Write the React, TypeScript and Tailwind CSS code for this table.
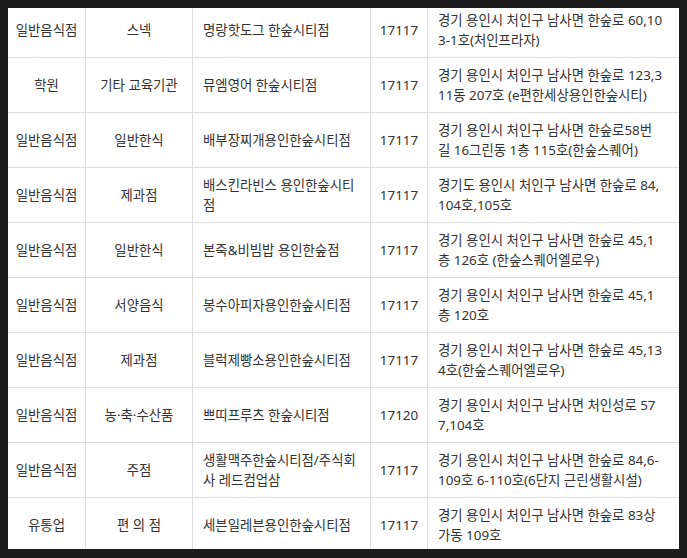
type Row = {
  type: string;
  category: string;
  name: string[];
  zip: string;
  address: string[];
};

const rows: Row[] = [
  {
    type: "일반음식점",
    category: "스넥",
    name: ["명랑핫도그 한숲시티점"],
    zip: "17117",
    address: ["경기 용인시 처인구 남사면 한숲로 60,10", "3-1호(처인프라자)"],
  },
  {
    type: "학원",
    category: "기타 교육기관",
    name: ["뮤엠영어 한숲시티점"],
    zip: "17117",
    address: ["경기 용인시 처인구 남사면 한숲로 123,3", "11동 207호 (e편한세상용인한숲시티)"],
  },
  {
    type: "일반음식점",
    category: "일반한식",
    name: ["배부장찌개용인한숲시티점"],
    zip: "17117",
    address: ["경기 용인시 처인구 남사면 한숲로58번", "길 16그린동 1층 115호(한숲스퀘어)"],
  },
  {
    type: "일반음식점",
    category: "제과점",
    name: ["배스킨라빈스 용인한숲시티", "점"],
    zip: "17117",
    address: ["경기도 용인시 처인구 남사면 한숲로 84,", "104호,105호"],
  },
  {
    type: "일반음식점",
    category: "일반한식",
    name: ["본죽&비빔밥 용인한숲점"],
    zip: "17117",
    address: ["경기 용인시 처인구 남사면 한숲로 45,1", "층 126호 (한숲스퀘어엘로우)"],
  },
  {
    type: "일반음식점",
    category: "서양음식",
    name: ["봉수아피자용인한숲시티점"],
    zip: "17117",
    address: ["경기 용인시 처인구 남사면 한숲로 45,1", "층 120호"],
  },
  {
    type: "일반음식점",
    category: "제과점",
    name: ["블럭제빵소용인한숲시티점"],
    zip: "17117",
    address: ["경기 용인시 처인구 남사면 한숲로 45,13", "4호(한숲스퀘어엘로우)"],
  },
  {
    type: "일반음식점",
    category: "농·축·수산품",
    name: ["쁘띠프루츠 한숲시티점"],
    zip: "17120",
    address: ["경기 용인시 처인구 남사면 처인성로 57", "7,104호"],
  },
  {
    type: "일반음식점",
    category: "주점",
    name: ["생활맥주한숲시티점/주식회", "사 레드컴업삼"],
    zip: "17117",
    address: ["경기 용인시 처인구 남사면 한숲로 84,6-", "109호 6-110호(6단지 근린생활시설)"],
  },
  {
    type: "유통업",
    category: "편 의 점",
    name: ["세븐일레븐용인한숲시티점"],
    zip: "17117",
    address: ["경기 용인시 처인구 남사면 한숲로 83상", "가동 109호"],
  },
];

function Lines({ lines }: { lines: string[] }) {
  return (
    <div>
      {lines.map((l, i) => (
        <div key={i} className="whitespace-nowrap">
          {l}
        </div>
      ))}
    </div>
  );
}

const cell = "flex items-center h-[55px] border-b border-[#dddddd]";

export default function App() {
  return (
    <div className="w-[687px] h-[558px] bg-[#1c1c1c] pt-[8px] pl-[8px]">
      <div
        className="w-[671px] h-[541px] overflow-hidden bg-white text-[13.4px] leading-[20px] text-[#333333]"
        style={{ fontFamily: '"Noto Sans", "Noto Sans CJK KR", sans-serif' }}
      >
        <div className="-mt-[5px] grid grid-cols-[78px_107px_178px_57px_251px]">
          {rows.map((r, i) => (
            <div key={i} className="contents">
              <div className={`${cell} justify-center border-r`}>{r.type}</div>
              <div className={`${cell} justify-center border-r`}>{r.category}</div>
              <div className={`${cell} px-[10px] border-r`}>
                <Lines lines={r.name} />
              </div>
              <div className={`${cell} justify-center border-r`}>{r.zip}</div>
              <div className={`${cell} px-[10px]`}>
                <Lines lines={r.address} />
              </div>
            </div>
          ))}
        </div>
      </div>
    </div>
  );
}
